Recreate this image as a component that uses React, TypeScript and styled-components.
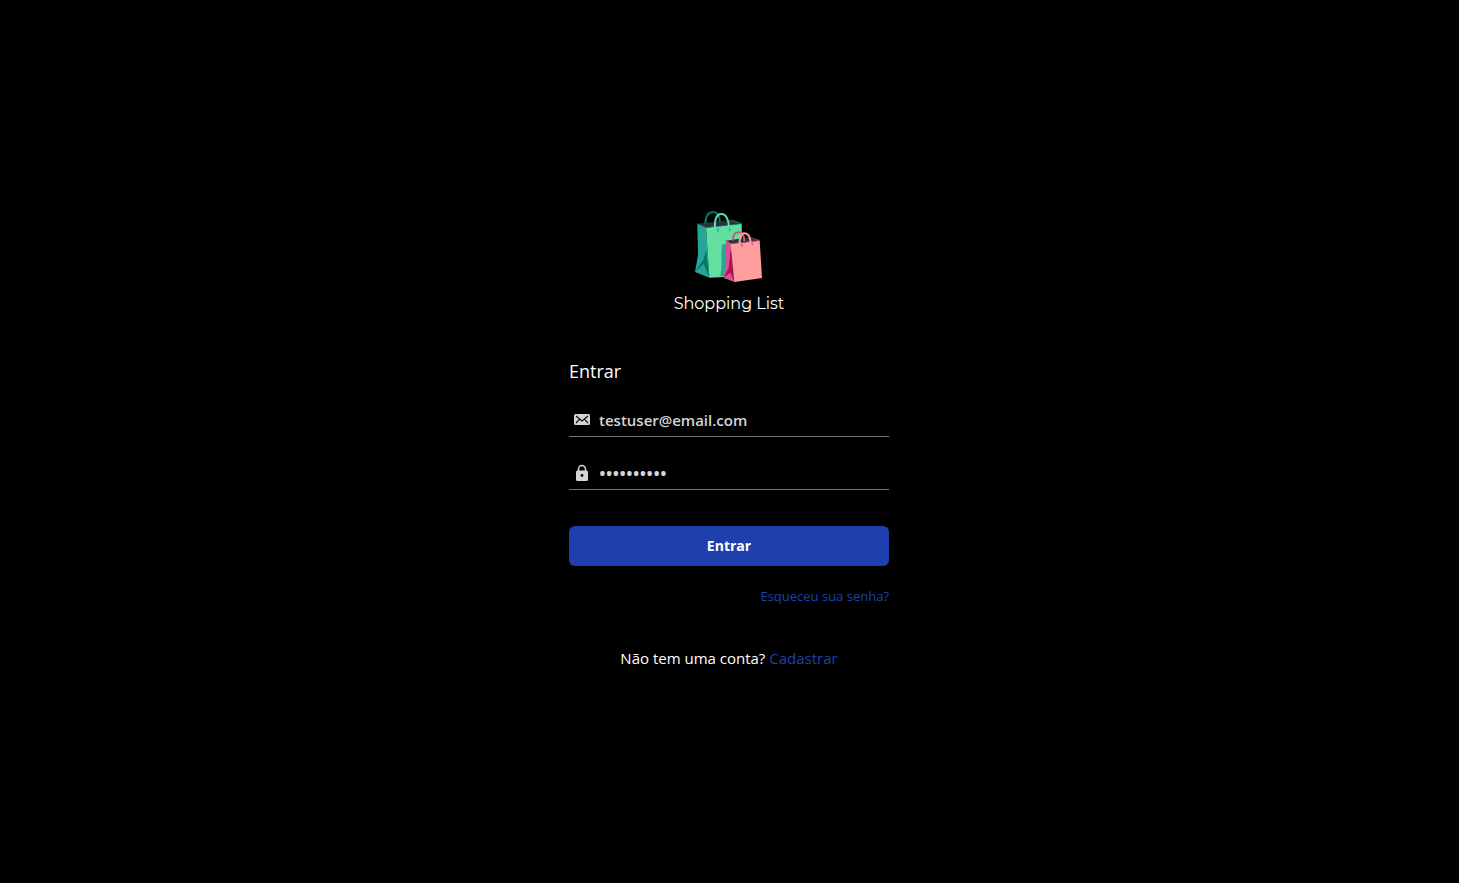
import React from "react";
import styled, { createGlobalStyle } from "styled-components";

const GlobalStyle = createGlobalStyle`
  * { box-sizing: border-box; }
  body {
    margin: 0;
    background: #000;
    color: #fff;
    font-family: "Segoe UI", "Open Sans", "Noto Sans", sans-serif;
    font-size: 15px;
    line-height: 24px;
  }
`;

const Page = styled.main`
  min-height: 100vh;
  display: flex;
  flex-direction: column;
  align-items: center;
  justify-content: center;
  padding: 16px 17px 18px 16px;
`;

const Brand = styled.header`
  display: flex;
  flex-direction: column;
  align-items: center;
  gap: 9px;
  margin-bottom: 41px;
`;

const BrandName = styled.span`
  font-family: Montserrat, Inter, sans-serif;
  font-size: 16px;
  line-height: 24px;
`;

const Form = styled.form`
  width: 100%;
  max-width: 320px;
  display: flex;
  flex-direction: column;
`;

const Title = styled.h1`
  margin: 0 0 19px;
  font-size: 18px;
  font-weight: 400;
  line-height: 28px;
`;

const Field = styled.label`
  display: flex;
  align-items: center;
  gap: 8px;
  height: 33px;
  margin-bottom: 20px;
  padding: 0 4px;
  border-bottom: 1px solid #71717a;
  color: #d4d4d8;
`;

const FieldIcon = styled.svg`
  flex: none;
  width: 18px;
  height: 18px;
`;

const Input = styled.input`
  flex: 1;
  min-width: 0;
  padding: 0;
  border: 0;
  outline: 0;
  background: transparent;
  color: inherit;
  font: inherit;
  font-weight: 600;

  &[type="password"] {
    font-size: 18px;
  }
`;

const SubmitButton = styled.button`
  height: 40px;
  margin-top: 16px;
  border: 0;
  border-radius: 6px;
  background: #1e40af;
  color: #fff;
  font: inherit;
  font-size: 14px;
  font-weight: 700;
  cursor: pointer;
`;

const TextLink = styled.a`
  color: #1e40af;
  text-decoration: none;
`;

const ForgotLink = styled(TextLink)`
  align-self: flex-end;
  margin-top: 20px;
  font-size: 13px;
  line-height: 20px;
`;

const SignUp = styled.p`
  margin: 40px 0 0;
  text-align: center;
`;

const BagsLogo = () => (
  <svg width="68" height="72" viewBox="105 32 204 216" fill="none" aria-hidden="true">
    <path d="M112 70L220 58L245 69L138 83Z" fill="#263238" />
    <path d="M136 70C137 46 147 35 160 35C173 35 179 46 180 68" stroke="#00796b" strokeWidth="6" />
    <path d="M112 70L138 82L148 232L105 215L114 165Z" fill="#26a69a" />
    <path d="M130 178L138 150L148 232L131 190L105 215Z" fill="#00796b" />
    <path d="M138 82L245 70L246 130L205 229L148 232Z" fill="#63dfa0" />
    <path d="M145 79L162 77L162 67L142 67Z" fill="#263238" />
    <path d="M172 75L200 72L200 62L178 64Z" fill="#263238" />
    <path d="M186 133L204 129L208 226L181 227Q187 196 184 170Z" fill="#26a69a" />
    <path d="M112 70L138 82L245 70M205 60L245 69" stroke="#138579" strokeWidth="2" />
    <path d="M174 83V96M207 79L210 93" stroke="#26a69a" strokeWidth="4" />
    <path d="M165 86C163 57 170 41 184 41C198 41 207 58 207 84" stroke="#63dfa0" strokeWidth="6" />
    <path d="M197 121L270 111L300 121L214 131Z" fill="#263238" />
    <path d="M219 121C218 103 225 96 236 96C246 96 252 105 253 122" stroke="#d9518c" strokeWidth="6" />
    <path d="M197 120L212 131L223 245L190 232L197 198Z" fill="#d9518c" />
    <path d="M211 150L216 150L223 245L211 217L190 232L206 204Q210 175 211 150Z" fill="#ad1457" />
    <path d="M212 131L299 121L306 233L223 245Z" fill="#ff9e9e" />
    <path d="M197 120L213 130L299 120M270 112L299 120" stroke="#c74479" strokeWidth="2" />
    <path d="M244 129L247 139M275 126L278 134" stroke="#d9518c" strokeWidth="4" />
    <path d="M239 134C238 110 243 99 253 99C264 99 271 111 272 128" stroke="#ff9e9e" strokeWidth="6" />
  </svg>
);

const MailIcon = () => (
  <FieldIcon viewBox="0 0 18 18" aria-hidden="true">
    <rect x="1" y="3" width="16" height="11" rx="1.5" fill="currentColor" />
    <path d="M3 5L9 10L15 5M3 12L6.4 8.4M15 12L11.6 8.4" fill="none" stroke="#000" strokeWidth="1.1" />
  </FieldIcon>
);

const LockIcon = () => (
  <FieldIcon viewBox="0 0 18 18" aria-hidden="true">
    <path d="M5.5 8V5A3.5 3.5 0 0 1 12.5 5V8" fill="none" stroke="currentColor" strokeWidth="1.5" />
    <rect x="3" y="6.5" width="12" height="10.5" rx="1.5" fill="currentColor" />
    <circle cx="9" cy="11.5" r="1.4" fill="#000" />
  </FieldIcon>
);

export default function App() {
  return (
    <>
      <GlobalStyle />
      <Page>
        <Brand>
          <BagsLogo />
          <BrandName>Shopping List</BrandName>
        </Brand>
        <Form onSubmit={(event: React.FormEvent) => event.preventDefault()}>
          <Title>Entrar</Title>
          <Field>
            <MailIcon />
            <Input type="email" aria-label="E-mail" defaultValue="testuser@email.com" />
          </Field>
          <Field>
            <LockIcon />
            <Input type="password" aria-label="Senha" defaultValue="senha12345" />
          </Field>
          <SubmitButton type="submit">Entrar</SubmitButton>
          <ForgotLink href="#senha">Esqueceu sua senha?</ForgotLink>
          <SignUp>
            Não tem uma conta? <TextLink href="#cadastro">Cadastrar</TextLink>
          </SignUp>
        </Form>
      </Page>
    </>
  );
}
